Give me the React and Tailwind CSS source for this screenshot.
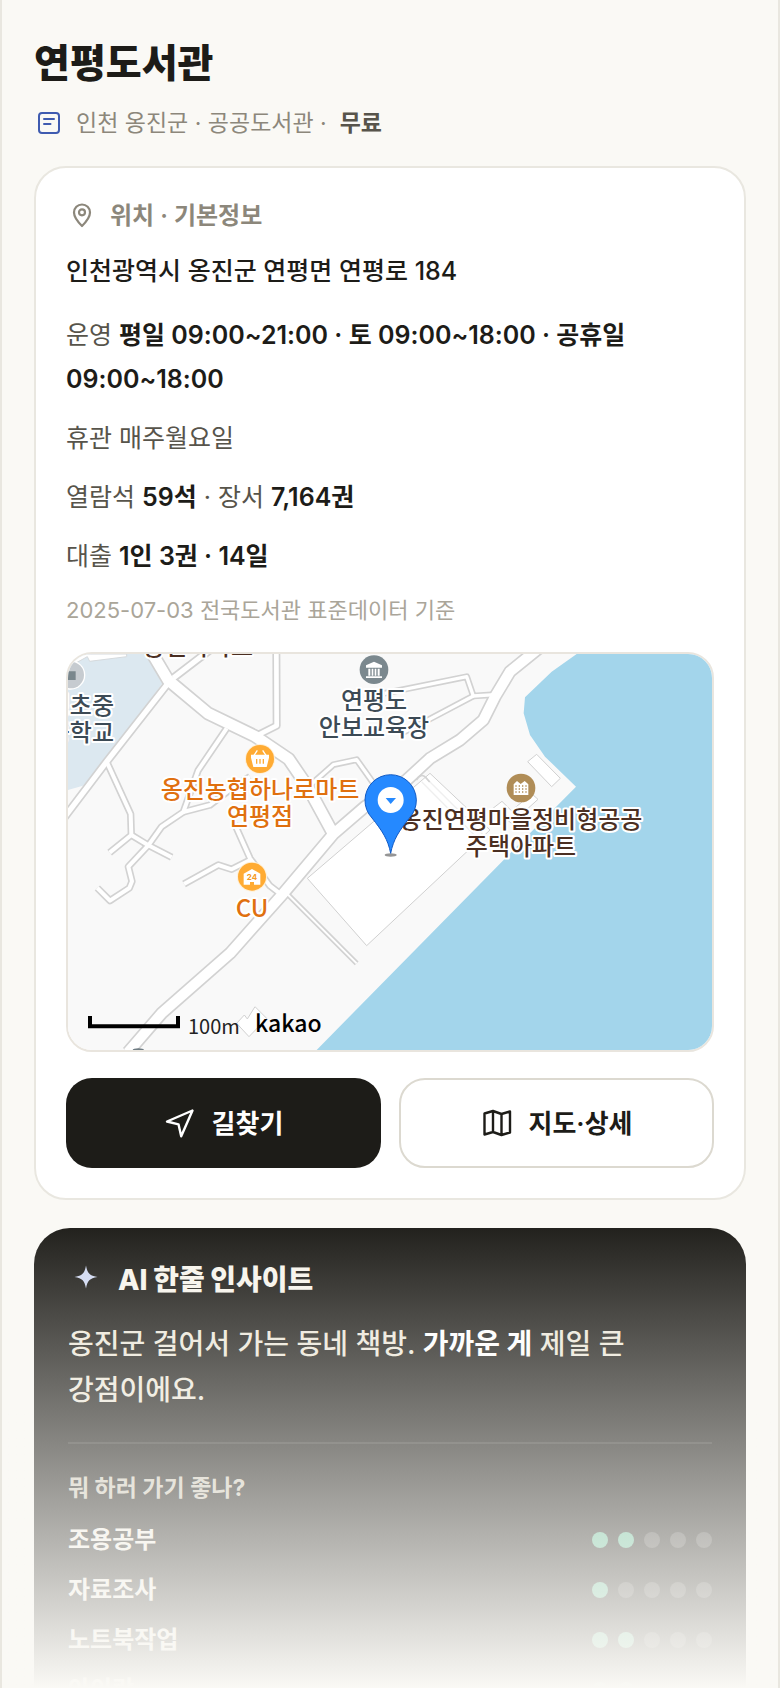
import React from "react";

const KR = "font-['Inter','Noto_Sans_CJK_KR',sans-serif]";

function NoteIcon() {
  return (
    <svg viewBox="0 0 30 30" className="size-[30px] shrink-0" fill="none" stroke="#3f5bb0" strokeWidth="2" strokeLinecap="round" aria-hidden="true">
      <rect x="5" y="5" width="20" height="20" rx="3" />
      <path d="M10 11h10M10 16h6.500" />
    </svg>
  );
}

function PinIcon() {
  return (
    <svg viewBox="0 0 32 32" className="size-8 shrink-0" fill="none" stroke="currentColor" strokeWidth="2.200" strokeLinejoin="round" aria-hidden="true">
      <path d="M16 26C12.500 22.500 8 17.500 8 12.500a8 8 0 0 1 16 0C24 17.500 19.500 22.500 16 26z" />
      <circle cx="16" cy="12.300" r="3" />
    </svg>
  );
}

function NavigateIcon() {
  return (
    <svg viewBox="0 0 32 32" className="size-8 shrink-0" fill="none" stroke="currentColor" strokeWidth="2.400" strokeLinejoin="round" aria-hidden="true">
      <path d="M28.500 3.500 3 14.500l11.500 2.800 2.700 12z" />
    </svg>
  );
}

function MapIcon() {
  return (
    <svg viewBox="0 0 32 32" className="size-8 shrink-0" fill="none" stroke="currentColor" strokeWidth="2.400" strokeLinejoin="round" aria-hidden="true">
      <path d="M3.500 6.500 12 4l8.500 3L29 4.500v21L20.500 28 12 25l-8.500 2.500zM12 4v21M20.500 7v21" />
    </svg>
  );
}

function SparkIcon() {
  return (
    <svg viewBox="0 0 36 36" className="size-9 shrink-0" fill="#d0d9f2" aria-hidden="true">
      <path d="M18 3.500C19.500 11.500 21.500 13.500 29.500 15 21.500 16.500 19.500 18.500 18 26.500 16.500 18.500 14.500 16.500 6.500 15 14.500 13.500 16.500 11.500 18 3.500z" />
    </svg>
  );
}

const ROADS = [
  ["M316 72 410 0 450-30", 26],
  ["M625-10 626 215 560 248", 24],
  ["M300 88 116 323-20 502", 26],
  ["M116 323 188 480 190 543 125 596", 22],
  ["M190 543 241 574 311 610", 22],
  ["M476 223 390 350 346 474 281 518 241 574 181 638 192 682 184 702 126 740 88 702", 22],
  ["M346 474 426 453 500 396 546 368", 22],
  ["M500 510 546 613 605 695 640 722", 22],
  ["M348 690 451 633 491 646 546 618", 22],
  ["M655 717 866 928", 16],
  ["M725 395 796 332 866 317 925 400", 20],
  ["M950 118 1196 68 1216 126 1280 122", 20],
  ["M1000 238 1076 200 1216 126", 20],
  ["M230-40 300 78 420 178 560 246 662 315 720 400 796 540", 42],
  ["M180 1195 281 1078 486 898 646 718 796 540 891 458 1016 378 1086 313 1176 258 1246 198 1281 128 1326 53 1406-12 1450-45", 40],
];

function Label({ x, y, color, anchor = "middle", children }) {
  return (
    <text x={x} y={y} fill={color} textAnchor={anchor} stroke="#ffffff" strokeWidth="4" strokeLinejoin="round" paintOrder="stroke" className="font-['Noto_Sans_CJK_KR',sans-serif] text-[24px] font-medium">
      {children}
    </text>
  );
}

function AreaMap() {
  return (
    <svg viewBox="0 0 644 396" preserveAspectRatio="xMidYMid slice" className="block h-[396px] w-full bg-[#f9f9f9]" role="img" aria-label="연평도서관 지도">
      <g transform="scale(.333333)">
        <path d="M0 0H235L286 85 121 310 45 395 0 408z" fill="#dce8f0" />
        <path d="M0 0H176V8L65 22 58 8 0 40z" fill="#fff" stroke="#d5d9dc" strokeWidth="3" />
        <path d="M718 673 1086 358 1266 528 896 875z" fill="#fff" stroke="#d0d0d0" strokeWidth="3" />
        <path d="M1061 383 1234 558M1074 372 1248 545" fill="none" stroke="#efefef" strokeWidth="4" />
        <path d="M1526 0 1451 53 1371 130 1367 178 1386 243 1431 308 1524 398 1336 588 906 1025 746 1188H1932V0z" fill="#a3d5eb" />
        <path d="M1406 301 1477 373 1451 398 1379 323z" fill="#fff" stroke="#d0d0d0" strokeWidth="3" />
        <path d="M1276 462 1302 442 1330 470 1392 420 1410 436 1330 508z" fill="#fff" stroke="#d0d0d0" strokeWidth="3" />
        <path d="M561 1058 596 1093 543 1148 506 1108 529 1083 538 1095z" fill="#fff" stroke="#d0d0d0" strokeWidth="3" />
        <g fill="none" stroke="#d2d2d2" strokeLinejoin="round">
          {ROADS.map(([d, w]) => <path key={d} d={d} strokeWidth={w} />)}
        </g>
        <g fill="none" stroke="#ffffff" strokeLinejoin="round">
          {ROADS.map(([d, w]) => <path key={d} d={d} strokeWidth={w - 10} />)}
        </g>
        <path d="M1045 378q14-22 28-8l12 14" fill="none" stroke="#d2d2d2" strokeWidth="5" />
        <ellipse cx="211" cy="1188" rx="17" ry="5" fill="#6f7c83" />

        <circle cx="8" cy="63" r="44" fill="#fff" />
        <circle cx="8" cy="63" r="40" fill="#c6cbd0" />
        <path d="M-8 52H23V78H-8z" fill="#7a878d" />

        <circle cx="918" cy="47" r="43" fill="#7b888e" />
        <path d="M918 23 942 34V41H894V34zM901 44h6v21h-6zM911 44h5v21h-5zM920 44h5v21h-5zM929 44h6v21h-6zM894 67h48v5h-48z" fill="#fff" />

        <circle cx="576" cy="315" r="45" fill="#fff0d8" />
        <circle cx="576" cy="315" r="42" fill="#ffab33" />
        <path d="M549 302H603V311L596 339H556L549 311z" fill="#fff" />
        <path d="M558 304 568 289M594 304 584 289" stroke="#fff" strokeWidth="4" />
        <path d="M566 315v14M576 315v14M586 315v14" stroke="#ffab33" strokeWidth="4" />

        <circle cx="1359" cy="402" r="43" fill="#b08d57" />
        <path d="M1337 391l10-10 11 9 12-9 11 10v32h-44z" fill="#fff" />
        <path d="M1342 396h34M1342 405h34M1342 414h34" stroke="#b08d57" strokeWidth="4" strokeDasharray="4 6" />

        <circle cx="552" cy="668" r="45" fill="#fff0d8" />
        <circle cx="552" cy="668" r="42" fill="#ffab33" />
        <path d="M552 645 577 659V692H558V684H546V692H527V659z" fill="#fff" />
      </g>

      <text x="184" y="226" textAnchor="middle" fill="#f59a23" className="font-['Inter',sans-serif] text-[8px] font-bold">24</text>

      <Label x="130" y="1" color="#4b2f22">옹진아파트</Label>
      <Label x="46" y="60" anchor="end" color="#3c4a55">평초중</Label>
      <Label x="46" y="87" anchor="end" color="#3c4a55">등학교</Label>
      <Label x="306" y="55" color="#3c4a55">연평도</Label>
      <Label x="306" y="82" color="#3c4a55">안보교육장</Label>
      <Label x="192" y="144" color="#e0700f">옹진농협하나로마트</Label>
      <Label x="192" y="171" color="#e0700f">연평점</Label>
      <Label x="184" y="263" color="#e0700f">CU</Label>
      <Label x="453" y="174" color="#4b2f22">옹진연평마을정비형공공</Label>
      <Label x="453" y="201" color="#4b2f22">주택아파트</Label>

      <g transform="scale(.333333)">
        <ellipse cx="968" cy="603" rx="18" ry="5" fill="#7b7b7b" opacity=".8" />
        <path d="M968 598C960 556 942 530 912 492A77 77 0 1 1 1024 492C994 530 976 556 968 598z" fill="#2589ff" stroke="#1059c4" strokeWidth="3" />
        <circle cx="968" cy="438" r="39" fill="#fff" />
        <path d="M953 432H984L968 450z" fill="#2589ff" />
        <path d="M66 1086V1117H330V1086" fill="none" stroke="#000" strokeWidth="12" />
      </g>
      <text x="120" y="380" fill="#222" className="font-['Noto_Sans_CJK_KR',sans-serif] text-[20px] font-normal">100m</text>
      <text x="187" y="378" fill="#000" className="font-['Noto_Sans_CJK_KR',sans-serif] text-[23px] font-medium">kakao</text>
    </svg>
  );
}

function Score({ label, value }) {
  return (
    <li className="flex h-[50px] items-center justify-between">
      <span className="text-[24px] font-semibold text-[#f3f0e8]">{label}</span>
      <span className="flex gap-[10px]" role="img" aria-label={`5점 만점에 ${value}점`}>
        {[1, 2, 3, 4, 5].map((n) => (
          <span key={n} className={n <= value ? "size-4 rounded-full bg-[#5fbb95]" : "size-4 rounded-full bg-white/20"} />
        ))}
      </span>
    </li>
  );
}

export default function App() {
  return (
    <main className={`relative h-screen w-full overflow-hidden border-x-2 border-[#e9e7e0] bg-[#faf9f5] px-8 pt-[38px] break-keep text-[#1d1c18] ${KR}`}>
      <h1 className="text-[39px] leading-[50px] font-black">연평도서관</h1>
      <p className="mt-[17px] flex items-center gap-3 text-[23px] leading-9 text-[#8c877b]">
        <NoteIcon />
        <span>인천 옹진군 · 공공도서관 ·&nbsp; <b className="font-semibold text-[#57544b]">무료</b></span>
      </p>

      <section className="mt-[25px] rounded-[32px] border-2 border-[#e9e7e0] bg-white p-[30px]">
        <h2 className="flex items-center gap-3 text-[24px] leading-9 font-semibold text-[#8c877b]">
          <PinIcon />
          위치 · 기본정보
        </h2>
        <p className="mt-[17px] text-[25px] leading-10 font-medium">인천광역시 옹진군 연평면 연평로 184</p>
        <div className="mt-[22px] flex flex-col gap-[15px] text-[25px] leading-[44px] text-[#57544b] [&_b]:font-semibold [&_b]:text-[#1d1c18]">
          <p>운영 <b>평일 09:00~21:00 · 토 09:00~18:00 · 공휴일 09:00~18:00</b></p>
          <p>휴관 매주월요일</p>
          <p>열람석 <b>59석</b> · 장서 <b>7,164권</b></p>
          <p>대출 <b>1인 3권 · 14일</b></p>
        </div>
        <p className="mt-4 text-[22px] leading-8 text-[#aaa599]">2025-07-03 전국도서관 표준데이터 기준</p>
        <div className="mt-[26px] overflow-hidden rounded-[26px] border-2 border-[#e9e5de]">
          <AreaMap />
        </div>
        <div className="mt-[26px] grid grid-cols-2 gap-[18px] text-[26px] font-semibold">
          <button type="button" className="flex h-[90px] items-center justify-center gap-4 rounded-[26px] bg-[#1d1c18] text-white">
            <NavigateIcon />
            길찾기
          </button>
          <button type="button" className="flex h-[90px] items-center justify-center gap-4 rounded-[26px] border-2 border-[#dcd9d0] bg-white">
            <MapIcon />
            지도·상세
          </button>
        </div>
      </section>

      <section className="mt-7 rounded-[36px] bg-[#1d1c18] px-[34px] pt-[29px] pb-9">
        <h2 className="flex items-center gap-[14px] text-[28px] leading-[46px] font-black text-[#f7f4ec]">
          <SparkIcon />
          <span><span className="font-extrabold">AI</span> 한줄 인사이트</span>
        </h2>
        <p className="mt-[18px] text-[28px] leading-[46px] font-medium text-[#ece7da]">
          옹진군 걸어서 가는 동네 책방. <b className="font-bold text-white">가까운 게</b> 제일 큰 강점이에요.
        </p>
        <div className="mt-[29px] border-t-2 border-white/10 pt-7">
          <h3 className="text-[23px] leading-8 font-bold text-[#cdc8ba]">뭐 하러 가기 좋나?</h3>
          <ul className="mt-[11px]">
            <Score label="조용공부" value={2} />
            <Score label="자료조사" value={1} />
            <Score label="노트북작업" value={2} />
            <Score label="아이랑" value={2} />
          </ul>
        </div>
      </section>

      <div className="pointer-events-none absolute inset-x-0 bottom-0 h-[472px] bg-linear-to-b from-[#faf9f5]/0 to-[#faf9f5]" />
    </main>
  );
}
